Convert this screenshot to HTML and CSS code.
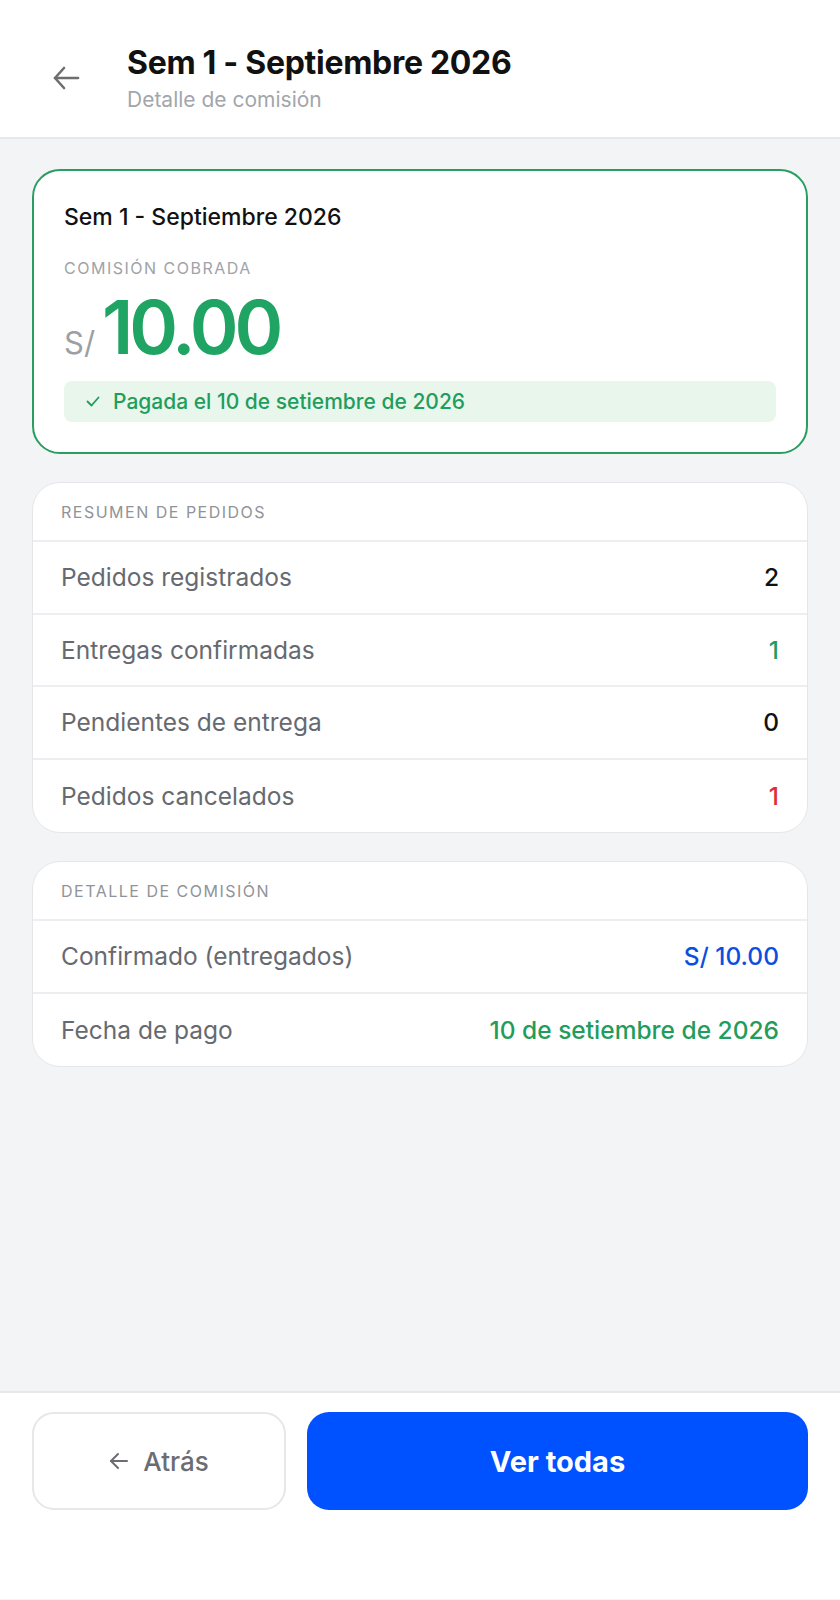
FILE: index.html
```html
<!DOCTYPE html>
<html lang="es">
<head>
    <meta charset="utf-8" />
    <meta name="viewport" content="width=device-width,initial-scale=1.0" />
    <title>Detalle de comisión</title>
    <link rel="stylesheet" href="styles.css">
</head>
<body>
    <div class="page">
        <header class="topbar">
            <a class="back">
                <svg width="28" height="24" viewBox="0 0 28 24" fill="none" stroke="#6e6e6e" stroke-width="2.6" stroke-linecap="round" stroke-linejoin="round"><path d="M26 12H3"/><path d="M12 2L3 12l9 10"/></svg>
            </a>
            <div class="heading">
                <h1>Sem 1 - Septiembre 2026</h1>
                <p>Detalle de comisión</p>
            </div>
        </header>

        <main class="content">
            <section class="hero">
                <div class="hero-week">Sem 1 - Septiembre 2026</div>
                <div class="hero-label">COMISIÓN COBRADA</div>
                <div class="hero-amount">
                    <span class="cur">S/</span>
                    <span class="num">10.00</span>
                </div>
                <div class="paid">
                    <svg width="14" height="11" viewBox="0 0 14 11" fill="none" stroke="#1f9d5c" stroke-width="1.8" stroke-linecap="round" stroke-linejoin="round"><path d="M1.5 5.5l4 4L12.5 1.5"/></svg>
                    <span>Pagada el 10 de setiembre de 2026</span>
                </div>
            </section>

            <section class="box">
                <div class="box-head">RESUMEN DE PEDIDOS</div>
                <div class="row"><span>Pedidos registrados</span><b>2</b></div>
                <div class="row"><span>Entregas confirmadas</span><b class="green">1</b></div>
                <div class="row"><span>Pendientes de entrega</span><b>0</b></div>
                <div class="row"><span>Pedidos cancelados</span><b class="red">1</b></div>
            </section>

            <section class="box">
                <div class="box-head">DETALLE DE COMISIÓN</div>
                <div class="row"><span>Confirmado (entregados)</span><b class="blue">S/ 10.00</b></div>
                <div class="row"><span>Fecha de pago</span><b class="green">10 de setiembre de 2026</b></div>
            </section>
        </main>

        <footer class="actions">
            <a class="btn-back">
                <svg width="20" height="18" viewBox="0 0 20 18" fill="none" stroke="#6b6d72" stroke-width="2" stroke-linecap="round" stroke-linejoin="round"><path d="M18 9H2"/><path d="M9 2L2 9l7 7"/></svg>
                Atrás
            </a>
            <a class="btn-all">Ver todas</a>
        </footer>
    </div>
</body>
</html>
```

FILE: styles.css
```css
* {
    padding: 0;
    margin: 0;
    box-sizing: border-box;
}

body {
    font-family: Inter, "Noto Sans", "Liberation Sans", sans-serif;
    background: #f3f4f6;
    color: #111;
}

.page {
    min-height: 1599px;
    display: flex;
    flex-direction: column;
}

.topbar {
    height: 139px;
    background: #fff;
    border-bottom: 2px solid #e7e8ea;
    display: flex;
    align-items: flex-start;
    padding: 44px 0 0 52px;
}

    .topbar .back {
        width: 28px;
        height: 24px;
        display: flex;
        margin-top: 22px;
        margin-right: 47px;
    }

    .topbar h1 {
        font-size: 32px;
        font-weight: 700;
        letter-spacing: -0.3px;
        line-height: 38px;
    }

    .topbar p {
        font-size: 21px;
        color: #a3a6ab;
        line-height: 28px;
        margin-top: 4px;
    }

.content {
    flex: 1;
    padding: 30px 32px;
    display: flex;
    flex-direction: column;
    gap: 28px;
}

.hero {
    background: #fff;
    border: 2px solid #2a9d62;
    border-radius: 28px;
    padding: 30px 30px 30px 30px;
}

.hero-week {
    font-size: 23px;
    font-weight: 500;
    line-height: 32px;
}

.hero-label {
    font-size: 16px;
    color: #a0a3a8;
    letter-spacing: 1.5px;
    margin-top: 24px;
    line-height: 22px;
}

.hero-amount {
    display: flex;
    align-items: baseline;
    height: 88px;
    margin-top: 4px;
}

    .hero-amount .cur {
        font-size: 31px;
        color: #9c9fa4;
        margin-right: 7px;
    }

    .hero-amount .num {
        font-size: 74px;
        font-weight: 600;
        color: #1fa463;
        letter-spacing: -4px;
        line-height: 88px;
    }

.paid {
    margin-top: 10px;
    background: #e8f6ec;
    border-radius: 8px;
    height: 41px;
    display: flex;
    align-items: center;
    padding-left: 22px;
    gap: 13px;
    color: #1f9d5c;
    font-size: 21px;
    font-weight: 500;
}

.box {
    background: #fff;
    border: 1px solid #e4e6e9;
    border-radius: 28px;
    overflow: hidden;
}

.box-head {
    height: 59px;
    display: flex;
    align-items: center;
    padding: 0 28px;
    font-size: 16px;
    letter-spacing: 1.5px;
    color: #909398;
    border-bottom: 2px solid #eceef0;
}

.row {
    height: 72.5px;
    display: flex;
    align-items: center;
    justify-content: space-between;
    padding: 0 28px;
    font-size: 24.5px;
    border-bottom: 2px solid #eceef0;
}

    .row:last-child {
        border-bottom: none;
    }

    .row span {
        color: #666a70;
    }

    .row b {
        font-weight: 500;
        color: #111;
    }

    .row .green {
        color: #1f9d5c;
    }

    .row .red {
        color: #dc2f36;
    }

    .row .blue {
        color: #0b4fe0;
    }

.actions {
    background: #fff;
    border-top: 2px solid #e7e8ea;
    height: 208px;
    padding: 19px 32px 0;
    display: flex;
    align-items: flex-start;
    gap: 21px;
}

    .actions a {
        height: 98px;
        border-radius: 22px;
        display: flex;
        align-items: center;
        justify-content: center;
    }

.btn-back {
    width: 254px;
    border: 2px solid #e6e7e9;
    color: #6b6d72;
    font-size: 26px;
    font-weight: 500;
    gap: 14px;
}

.btn-all {
    flex: 1;
    background: #0051ff;
    color: #fff;
    font-weight: 700;
    font-size: 29px;
}
```
